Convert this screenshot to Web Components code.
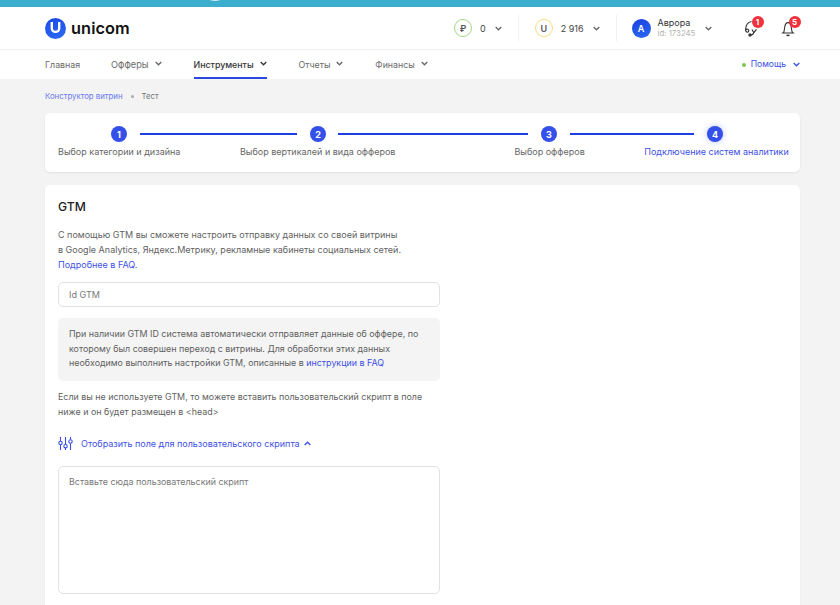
<!DOCTYPE html>
<html lang="ru">
<head>
<meta charset="utf-8">
<title>Unicom</title>
<style>
  html, body { margin: 0; height: 605px; overflow: hidden; background: #f3f3f3; }
  body { font: 9px/15px Inter, "Noto Sans", sans-serif; color: #5f5f5f; }
</style>
</head>
<body>
<app-topbar></app-topbar>
<app-header></app-header>
<app-nav>
  <nav-item>Главная</nav-item>
  <nav-item arrow style="margin-left:31px;font-size:9.2px">Офферы</nav-item>
  <nav-item arrow active style="margin-left:32px">Инструменты</nav-item>
  <nav-item arrow style="margin-left:32px">Отчеты</nav-item>
  <nav-item arrow style="margin-left:32px">Финансы</nav-item>
</app-nav>
<app-crumbs></app-crumbs>
<step-bar></step-bar>
<gtm-card></gtm-card>

<script>
const CHEVRON = (color, w = 7) => `<svg width="${w}" height="5" viewBox="0 0 7 5" fill="none" stroke="${color}" stroke-width="1.3"><path d="M.7 1l2.8 2.8L6.3 1"/></svg>`;

class AppTopbar extends HTMLElement {
  constructor() {
    super();
    this.attachShadow({ mode: "open" });
    this.shadowRoot.innerHTML = `
      <style>
        :host { display: block; height: 7px; background: #3badcd; position: relative; overflow: hidden; }
        i { position: absolute; left: 207px; top: -7px; width: 16px; height: 8px; border-radius: 50%; background: #cfe9f1; }
      </style>
      <i></i>`;
  }
}

class BalancePill extends HTMLElement {
  constructor() {
    super();
    this.attachShadow({ mode: "open" });
    const ring = this.getAttribute("ring");
    this.shadowRoot.innerHTML = `
      <style>
        :host { display: flex; align-items: center; font-size: 9px; color: #444; }
        .ring { box-sizing: border-box; width: 18px; height: 18px; border: 1.4px solid ${ring}; border-radius: 50%; display: grid; place-items: center; font-size: 9px; font-weight: 600; color: #555; }
        .val { margin-left: 8px; }
        svg { margin-left: 9px; }
      </style>
      <span class="ring">${this.getAttribute("sym")}</span>
      <span class="val">${this.getAttribute("val")}</span>
      ${CHEVRON("#666")}`;
  }
}

class AppHeader extends HTMLElement {
  constructor() {
    super();
    this.attachShadow({ mode: "open" });
    this.shadowRoot.innerHTML = `
      <style>
        :host { display: flex; align-items: center; height: 42px; padding: 0 0 0 45px; background: #fff; border-bottom: 1px solid #efefef; }
        .logo { display: flex; align-items: center; gap: 5px; width: 85px; font-size: 16.3px; font-weight: 600; color: #111; letter-spacing: .1px; }
        .mark { width: 21px; height: 21px; flex: none; border-radius: 50%; background: linear-gradient(160deg, #1a49e8, #2c6cf2); display: grid; place-items: center; }
        .right { margin-left: 324px; display: flex; align-items: center; }
        .sep { width: 1px; height: 26px; background: #f1f1f1; }
        .user { display: flex; align-items: center; margin-left: 15px; }
        .ava { width: 19px; height: 19px; border-radius: 50%; background: linear-gradient(160deg, #1a3fe0, #2c6cf2); color: #fff; font-size: 9px; font-weight: 600; display: grid; place-items: center; }
        .who { margin-left: 7px; width: 37px; display: flex; flex-direction: column; line-height: 11px; white-space: nowrap; }
        .name { font-size: 9px; color: #333; }
        .id { font-size: 7.8px; color: #b4b4b4; }
        .user svg { margin-left: 10px; }
        .ico { position: relative; display: block; width: 18px; height: 18px; }
        .badge { position: absolute; width: 12px; height: 12px; border-radius: 50%; background: #f0323c; color: #fff; font-size: 8px; font-weight: 700; line-height: 12px; text-align: center; }
      </style>
      <div class="logo">
        <span class="mark"><svg width="11" height="12" viewBox="0 0 11 12" fill="none" stroke="#fff" stroke-width="2.4"><path d="M1.8 0v6.2a3.7 3.7 0 0 0 7.4 0V0"/></svg></span>
        unicom
      </div>
      <div class="right">
        <balance-pill sym="₽" val="0" ring="#a6d884"></balance-pill>
        <span class="sep" style="margin-left:16px"></span>
        <balance-pill sym="U" val="2 916" ring="#f8dc7c" style="margin-left:16px"></balance-pill>
        <span class="sep" style="margin-left:16px"></span>
        <div class="user">
          <span class="ava">A</span>
          <div class="who"><span class="name">Аврора</span><span class="id">id: 173245</span></div>
          ${CHEVRON("#666")}
        </div>
        <span class="ico" style="margin-left:31px">
          <svg width="18" height="18" viewBox="0 0 18 18" fill="none" stroke="#333" stroke-width="1.2"><path d="M8.5 2.5C5 3.2 2.8 6 2.6 10.5c-.1 2 1 3 2.1 2.7 1.3-.3 1.4-2.4.1-2.9-1-.4-1.8.1-2.2.8"/><path d="M9 10.5l1.8 3.2 2.7-3.4M10.8 13.7c-.5 1.6-1.7 2.3-3.3 2.4"/><circle cx="7" cy="16" r="1.1" fill="#333"/></svg>
          <span class="badge" style="left:9px;top:-3px">1</span>
        </span>
        <span class="ico" style="margin-left:18px">
          <svg width="18" height="18" viewBox="0 0 18 18" fill="none" stroke="#333" stroke-width="1.1"><path d="M2.7 14h12.6M4.3 14c1.3-1.6 1-3.8 1.4-5.8C6.1 5.6 7.2 3.6 9 3.6s2.9 2 3.3 4.6c.4 2 .1 4.2 1.4 5.8"/><path d="M7.5 16.4h3" stroke-width="1.5"/></svg>
          <span class="badge" style="left:10px;top:-3px">5</span>
        </span>
      </div>`;
  }
}

class NavItem extends HTMLElement {
  constructor() {
    super();
    this.attachShadow({ mode: "open" });
    const active = this.hasAttribute("active");
    this.shadowRoot.innerHTML = `
      <style>
        :host { display: flex; align-items: center; height: 100%; box-sizing: border-box; font-size: 8.8px; color: ${active ? "#333" : "#6a6a6a"}; font-weight: ${active ? 500 : 400}; position: relative; }
        svg { margin-left: 6px; margin-bottom: 2px; }
        .bar { position: absolute; left: 0; right: 0; bottom: 0; height: 2px; background: #2a48e0; }
      </style>
      <slot></slot>
      ${this.hasAttribute("arrow") ? CHEVRON(active ? "#333" : "#666") : ""}
      ${active ? '<span class="bar"></span>' : ""}`;
  }
}

class AppNav extends HTMLElement {
  constructor() {
    super();
    this.attachShadow({ mode: "open" });
    this.shadowRoot.innerHTML = `
      <style>
        :host { display: flex; height: 29px; padding: 0 40px 0 45px; background: #fff; }
        .help { margin-left: auto; display: flex; align-items: center; gap: 7px; color: #3d50e6; font-size: 8.6px; }
        .dot { width: 4px; height: 4px; border-radius: 50%; background: #7ec850; margin-right: -2px; }
      </style>
      <slot></slot>
      <div class="help"><span class="dot"></span><span>Помощь</span>${CHEVRON("#3d50e6")}</div>`;
  }
}

class AppCrumbs extends HTMLElement {
  constructor() {
    super();
    this.attachShadow({ mode: "open" });
    this.shadowRoot.innerHTML = `
      <style>
        :host { display: flex; align-items: center; gap: 8px; height: 34px; padding-left: 45px; font-size: 7.8px; color: #777; }
        .link { color: #6a79ee; }
        i { width: 3px; height: 3px; border-radius: 50%; background: #aaa; }
      </style>
      <span class="link">Конструктор витрин</span><i></i><span>Тест</span>`;
  }
}

class StepBar extends HTMLElement {
  constructor() {
    super();
    this.attachShadow({ mode: "open" });
    this.shadowRoot.innerHTML = `
      <style>
        :host { display: block; box-sizing: border-box; width: 755px; height: 59px; margin-left: 45px; padding: 13px 13px 0; background: #fff; border-radius: 5px; box-shadow: 0 1px 2px rgba(0,0,0,.08); }
        .track { display: flex; align-items: center; padding-left: 53px; }
        .num { width: 16px; height: 16px; flex: none; border-radius: 50%; background: #3450e8; color: #fff; font-size: 9px; font-weight: 700; display: grid; place-items: center; }
        .num.on { box-shadow: 0 0 6px rgba(52,80,232,.35); }
        .line { height: 2px; flex: none; margin: 0 13px; background: #1f3fe6; }
        .labels { display: flex; margin-top: 2px; font-size: 9px; color: #666; line-height: 15px; white-space: nowrap; }
        .labels span:last-child { color: #3d50e6; }
      </style>
      <div class="track">
        <span class="num">1</span><span class="line" style="width:157px"></span>
        <span class="num">2</span><span class="line" style="width:190px;margin-left:12px"></span>
        <span class="num">3</span><span class="line" style="width:124px"></span>
        <span class="num on">4</span>
      </div>
      <div class="labels">
        <span>Выбор категории и дизайна</span>
        <span style="margin-left:59.5px">Выбор вертикалей и вида офферов</span>
        <span style="margin-left:119px">Выбор офферов</span>
        <span style="margin-left:59.5px">Подключение систем аналитики</span>
      </div>`;
  }
}

class GtmCard extends HTMLElement {
  constructor() {
    super();
    this.attachShadow({ mode: "open" });
    this.shadowRoot.innerHTML = `
      <style>
        :host { display: block; box-sizing: border-box; width: 755px; height: 440px; margin: 13px 0 0 45px; padding: 14px 13px 0; background: #fff; border-radius: 5px; box-shadow: 0 1px 2px rgba(0,0,0,.05); }
        a { color: #3d50e6; text-decoration: none; }
        h2 { margin: 0; font-size: 12.2px; line-height: 16px; font-weight: 500; color: #222; }
        p { margin: 0; }
        .intro { margin-top: 12px; }
        .col { width: 382px; }
        .field { box-sizing: border-box; border: 1px solid #e2e2e2; border-radius: 5px; padding: 0 10px; color: #777; }
        .id { height: 25px; line-height: 23px; margin-top: 10px; }
        .note { box-sizing: border-box; height: 63px; margin-top: 11px; padding: 9px 11px; background: #f4f4f4; border-radius: 5px; font-size: 8.9px; line-height: 14.5px; }
        .more { margin-top: 9px; font-size: 8.9px; line-height: 14.5px; }
        .toggle { display: flex; align-items: center; margin-top: 16px; color: #3d50e6; height: 16px; }
        .toggle span { margin-left: 8px; }
        .toggle svg:last-child { margin-left: 4px; }
        .script { height: 128px; margin-top: 15px; padding-top: 7px; font-size: 8.9px; line-height: 15px; }
      </style>
      <h2>GTM</h2>
      <p class="intro">С помощью GTM вы сможете настроить отправку данных со своей витрины<br>в Google Analytics, Яндекс.Метрику, рекламные кабинеты социальных сетей.<br><a href="#">Подробнее в FAQ</a>.</p>
      <div class="col">
        <div class="field id">Id GTM</div>
        <div class="note">При наличии GTM ID система автоматически отправляет данные об оффере, по которому был совершен переход с витрины. Для обработки этих данных необходимо выполнить настройки GTM, описанные в <a href="#">инструкции в FAQ</a></div>
        <p class="more">Если вы не используете GTM, то можете вставить пользовательский скрипт в поле ниже и он будет размещен в &lt;head&gt;</p>
        <div class="toggle">
          <svg width="15" height="15" viewBox="0 0 15 15" fill="none" stroke="#3d50e6" stroke-width="1.1"><path d="M2.5 1v4M2.5 9v5M7.5 1v7.5M7.5 12v2M12.5 1v2.5M12.5 7.5V14"/><circle cx="2.5" cy="7" r="1.7"/><circle cx="7.5" cy="10.2" r="1.7"/><circle cx="12.5" cy="5.5" r="1.7"/></svg>
          <span>Отобразить поле для пользовательского скрипта</span>
          <svg width="7" height="5" viewBox="0 0 7 5" fill="none" stroke="#3d50e6" stroke-width="1.3"><path d="M.7 4l2.8-2.8L6.3 4"/></svg>
        </div>
        <div class="field script">Вставьте сюда пользовательский скрипт</div>
      </div>`;
  }
}

customElements.define("app-topbar", AppTopbar);
customElements.define("balance-pill", BalancePill);
customElements.define("app-header", AppHeader);
customElements.define("nav-item", NavItem);
customElements.define("app-nav", AppNav);
customElements.define("app-crumbs", AppCrumbs);
customElements.define("step-bar", StepBar);
customElements.define("gtm-card", GtmCard);
</script>
</body>
</html>
